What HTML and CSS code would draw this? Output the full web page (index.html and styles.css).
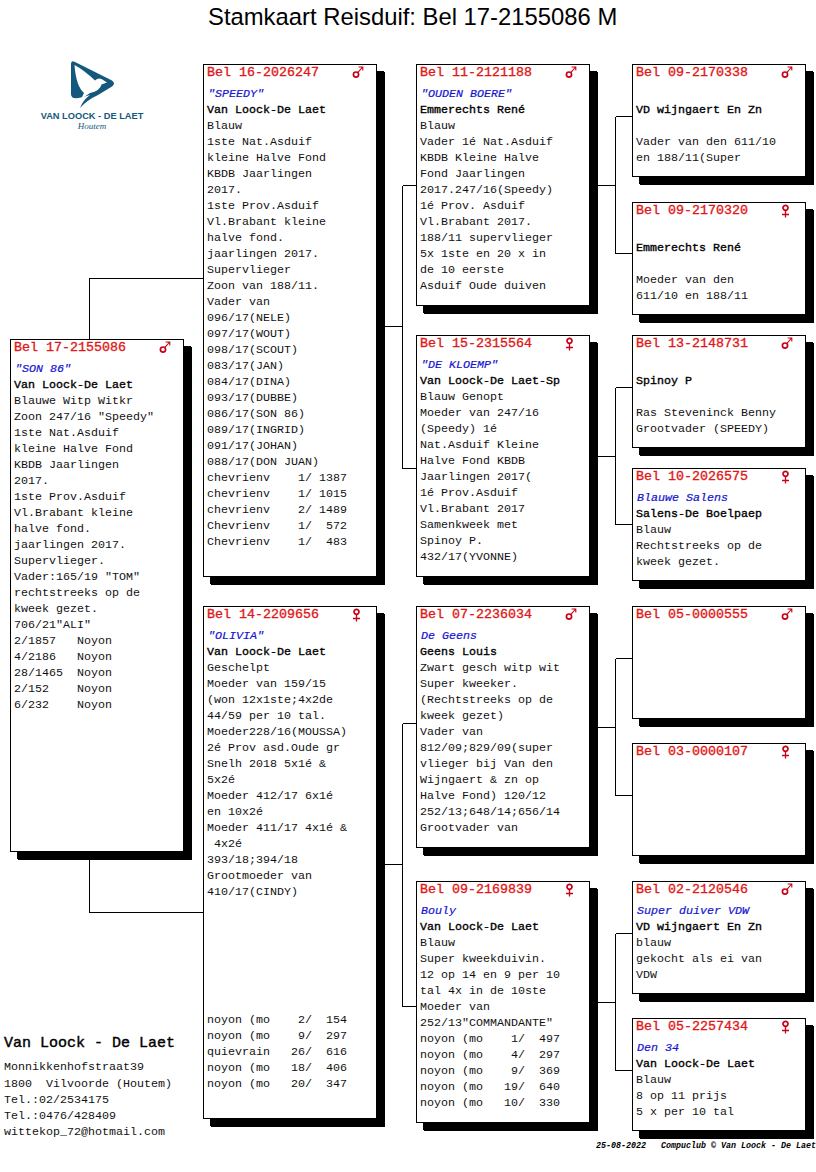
FILE: index.html
```html
<!DOCTYPE html>
<html lang="nl">
<head>
<meta charset="utf-8">
<title>Stamkaart Reisduif</title>
<link rel="stylesheet" href="styles.css">
</head>
<body>
<svg class="defs" width="0" height="0" aria-hidden="true">
  <symbol id="male" viewBox="0 0 12 15">
    <circle cx="4" cy="8.6" r="2.6" fill="none" stroke="currentColor" stroke-width="1.7"/>
    <path d="M5.8 6.6 10.6 1M6.6 1H10.8V4.4" fill="none" stroke="currentColor" stroke-width="1.1"/>
  </symbol>
  <symbol id="female" viewBox="0 0 12 15">
    <circle cx="4.5" cy="3.8" r="2.5" fill="none" stroke="currentColor" stroke-width="1.7"/>
    <path d="M4.5 6.5V13.5M1 10.5H8" fill="none" stroke="currentColor" stroke-width="1.3"/>
  </symbol>
</svg>

<h1 class="title">Stamkaart Reisduif: Bel 17-2155086 M</h1>

<main class="chart">
  <svg class="links" viewBox="0 60 816 1100" width="816" height="1100" aria-hidden="true">
    <path d="M89.5 339V278.5H203M89.5 852V912.5H203"/>
    <path d="M385 326.5H402.5M402.5 185.5V468.5M402.5 185.5H416M402.5 468.5H416"/>
    <path d="M385 864.5H402.5M402.5 723.5V1006.5M402.5 723.5H416M402.5 1006.5H416"/>
    <path d="M598 185.5H615.5M615.5 116.5V253.5M615.5 116.5H632M615.5 253.5H632"/>
    <path d="M598 456.5H615.5M615.5 387.5V524.5M615.5 387.5H632M615.5 524.5H632"/>
    <path d="M598 727.5H615.5M615.5 658.5V795.5M615.5 658.5H632M615.5 795.5H632"/>
    <path d="M598 1002.5H615.5M615.5 933.5V1070.5M615.5 933.5H632M615.5 1070.5H632"/>
  </svg>

  <div class="col col-a">
    <div class="brand">
      <svg class="brand-mark" viewBox="69 60 46 50" width="46" height="50" aria-hidden="true">
        <path class="brand-blue" d="M71 64Q71 60 75 62L112 80.500Q116 83.500 112 86.500L98 95Q87 100 80 108Q83 100 90 95L81 97.500Q71 100 71 94Z"/>
        <path class="brand-white" d="M74.500 65Q84 70 95 80.500Q98 77.500 101.500 79L107 82.500L101.500 84.500Q100 91 90 93L81 99L84 93Q76 86 74.500 65Z"/>
      </svg>
      <div class="brand-name">VAN LOOCK - DE LAET</div>
      <div class="brand-place">Houtem</div>
    </div>

    <article class="node tall root">
      <div class="head"><span>Bel 17-2155086</span><svg class="sex"><use href="#male"/></svg></div>
      <div class="name">"SON 86"</div>
      <div class="owner">Van Loock-De Laet</div>
      <div class="txt">Blauwe Witp Witkr
Zoon 247/16 "Speedy"
1ste Nat.Asduif
kleine Halve Fond
KBDB Jaarlingen
2017.
1ste Prov.Asduif
Vl.Brabant kleine
halve fond.
jaarlingen 2017.
Supervlieger.
Vader:165/19 "TOM"
rechtstreeks op de
kweek gezet.
706/21"ALI"
2/1857   Noyon
4/2186   Noyon
28/1465  Noyon
2/152    Noyon
6/232    Noyon</div>
    </article>

    <address class="contact">
      <div class="contact-name">Van Loock - De Laet</div>
      <div class="txt contact-street">Monnikkenhofstraat39</div>
      <div class="txt">1800  Vilvoorde (Houtem)
Tel.:02/2534175
Tel.:0476/428409
wittekop_72@hotmail.com</div>
    </address>
  </div>

  <div class="col col-b">
    <article class="node tall">
      <div class="head"><span>Bel 16-2026247</span><svg class="sex"><use href="#male"/></svg></div>
      <div class="name">"SPEEDY"</div>
      <div class="owner">Van Loock-De Laet</div>
      <div class="txt">Blauw
1ste Nat.Asduif
kleine Halve Fond
KBDB Jaarlingen
2017.
1ste Prov.Asduif
Vl.Brabant kleine
halve fond.
jaarlingen 2017.
Supervlieger
Zoon van 188/11.
Vader van
096/17(NELE)
097/17(WOUT)
098/17(SCOUT)
083/17(JAN)
084/17(DINA)
093/17(DUBBE)
086/17(SON 86)
089/17(INGRID)
091/17(JOHAN)
088/17(DON JUAN)
chevrienv    1/ 1387
chevrienv    1/ 1015
chevrienv    2/ 1489
Chevrienv    1/  572
Chevrienv    1/  483</div>
    </article>
    <article class="node tall g29">
      <div class="head"><span>Bel 14-2209656</span><svg class="sex"><use href="#female"/></svg></div>
      <div class="name">"OLIVIA"</div>
      <div class="owner">Van Loock-De Laet</div>
      <div class="txt">Geschelpt
Moeder van 159/15
(won 12x1ste;4x2de
44/59 per 10 tal.
Moeder228/16(MOUSSA)
2é Prov asd.Oude gr
Snelh 2018 5x1é &amp;
5x2é
Moeder 412/17 6x1é
en 10x2é
Moeder 411/17 4x1é &amp;
 4x2é
393/18;394/18
Grootmoeder van
410/17(CINDY)







noyon (mo    2/  154
noyon (mo    9/  297
quievrain   26/  616
noyon (mo   18/  406
noyon (mo   20/  347</div>
    </article>
  </div>

  <div class="col col-c">
    <article class="node mid">
      <div class="head"><span>Bel 11-2121188</span><svg class="sex"><use href="#male"/></svg></div>
      <div class="name">"OUDEN BOERE"</div>
      <div class="owner">Emmerechts René</div>
      <div class="txt">Blauw
Vader 1é Nat.Asduif
KBDB Kleine Halve
Fond Jaarlingen
2017.247/16(Speedy)
1é Prov. Asduif
Vl.Brabant 2017.
188/11 supervlieger
5x 1ste en 20 x in
de 10 eerste
Asduif Oude duiven</div>
    </article>
    <article class="node mid g29">
      <div class="head"><span>Bel 15-2315564</span><svg class="sex"><use href="#female"/></svg></div>
      <div class="name">"DE KLOEMP"</div>
      <div class="owner">Van Loock-De Laet-Sp</div>
      <div class="txt">Blauw Genopt
Moeder van 247/16
(Speedy) 1é
Nat.Asduif Kleine
Halve Fond KBDB
Jaarlingen 2017(
1é Prov.Asduif
Vl.Brabant 2017
Samenkweek met
Spinoy P.
432/17(YVONNE)</div>
    </article>
    <article class="node mid g29">
      <div class="head"><span>Bel 07-2236034</span><svg class="sex"><use href="#male"/></svg></div>
      <div class="name">De Geens</div>
      <div class="owner">Geens Louis</div>
      <div class="txt">Zwart gesch witp wit
Super kweeker.
(Rechtstreeks op de
kweek gezet)
Vader van
812/09;829/09(super
vlieger bij Van den
Wijngaert &amp; zn op
Halve Fond) 120/12
252/13;648/14;656/14
Grootvader van</div>
    </article>
    <article class="node mid g33">
      <div class="head"><span>Bel 09-2169839</span><svg class="sex"><use href="#female"/></svg></div>
      <div class="name">Bouly</div>
      <div class="owner">Van Loock-De Laet</div>
      <div class="txt">Blauw
Super kweekduivin.
12 op 14 en 9 per 10
tal 4x in de 10ste
Moeder van
252/13"COMMANDANTE"
noyon (mo    1/  497
noyon (mo    4/  297
noyon (mo    9/  369
noyon (mo   19/  640
noyon (mo   10/  330</div>
    </article>
  </div>

  <div class="col col-d">
    <article class="node low">
      <div class="head"><span>Bel 09-2170338</span><svg class="sex"><use href="#male"/></svg></div>
      <div class="name"></div>
      <div class="owner">VD wijngaert En Zn</div>
      <div class="txt">
Vader van den 611/10
en 188/11(Super</div>
    </article>
    <article class="node low g25">
      <div class="head"><span>Bel 09-2170320</span><svg class="sex"><use href="#female"/></svg></div>
      <div class="name"></div>
      <div class="owner">Emmerechts René</div>
      <div class="txt">
Moeder van den
611/10 en 188/11</div>
    </article>
    <article class="node low g20">
      <div class="head"><span>Bel 13-2148731</span><svg class="sex"><use href="#male"/></svg></div>
      <div class="name"></div>
      <div class="owner">Spinoy P</div>
      <div class="txt">
Ras Steveninck Benny
Grootvader (SPEEDY)</div>
    </article>
    <article class="node low g20">
      <div class="head"><span>Bel 10-2026575</span><svg class="sex"><use href="#female"/></svg></div>
      <div class="name">Blauwe Salens</div>
      <div class="owner">Salens-De Boelpaep</div>
      <div class="txt">Blauw
Rechtstreeks op de
kweek gezet.</div>
    </article>
    <article class="node low g25">
      <div class="head"><span>Bel 05-0000555</span><svg class="sex"><use href="#male"/></svg></div>
    </article>
    <article class="node low g24">
      <div class="head"><span>Bel 03-0000107</span><svg class="sex"><use href="#female"/></svg></div>
    </article>
    <article class="node low g25">
      <div class="head"><span>Bel 02-2120546</span><svg class="sex"><use href="#male"/></svg></div>
      <div class="name">Super duiver VDW</div>
      <div class="owner">VD wijngaert En Zn</div>
      <div class="txt">blauw
gekocht als ei van
VDW</div>
    </article>
    <article class="node low g24">
      <div class="head"><span>Bel 05-2257434</span><svg class="sex"><use href="#female"/></svg></div>
      <div class="name">Den 34</div>
      <div class="owner">Van Loock-De Laet</div>
      <div class="txt">Blauw
8 op 11 prijs
5 x per 10 tal</div>
    </article>
  </div>
</main>

<footer class="credit">25-08-2022   Compuclub © Van Loock - De Laet</footer>
</body>
</html>
```

FILE: styles.css
```css
* { box-sizing: border-box; }

html, body { margin: 0; padding: 0; background: #fff; }

body {
  width: 816px;
  height: 1172px;
  overflow: hidden;
  font-family: "Liberation Mono", monospace;
  font-size: 11.67px;
  line-height: 16px;
  color: #000;
}

.defs { position: absolute; }

.title {
  margin: 0;
  height: 60px;
  padding: 1px 0 0 208px;
  font-family: "Liberation Sans", Arial, sans-serif;
  font-size: 23.83px;
  font-weight: 400;
  line-height: 32px;
  white-space: nowrap;
}

.chart {
  position: relative;
  display: flex;
  align-items: flex-start;
  height: 1078px;
}

.links {
  position: absolute;
  left: 0;
  top: 0;
  fill: none;
  stroke: #000;
  stroke-width: 1;
  shape-rendering: crispEdges;
}

.col {
  position: relative;
  display: flex;
  flex-direction: column;
  flex: none;
}

.col-a { width: 180px; margin-left: 4px; }
.col-b { width: 174px; margin-left: 19px; padding-top: 4px; }
.col-c { width: 174px; margin-left: 39px; padding-top: 4px; }
.col-d { width: 174px; margin-left: 42px; padding-top: 4px; }

.node {
  width: 174px;
  flex: none;
  padding: 0 3px;
  background: #fff;
  border: 1px solid #000;
  box-shadow: 7px 7px 0 #000, 8px 8px 0 #000;
}

.tall { height: 513px; }
.mid { height: 242px; }
.low { height: 113px; }

.g20 { margin-top: 20px; }
.g24 { margin-top: 24px; }
.g25 { margin-top: 25px; }
.g29 { margin-top: 29px; }
.g33 { margin-top: 33px; }

.head {
  display: flex;
  justify-content: space-between;
  height: 21px;
  font-size: 13.33px;
  color: #e01818;
  -webkit-text-stroke: 0.35px #e01818;
}

.sex {
  width: 12px;
  height: 15px;
  margin: 1px 9px 0 0;
  color: #c80018;
}

.name {
  height: 16px;
  padding-left: 1px;
  font-style: italic;
  color: #1414d2;
  -webkit-text-stroke: 0.2px #1414d2;
  white-space: pre;
}

.owner {
  height: 16px;
  -webkit-text-stroke: 0.35px #000;
  white-space: pre;
}

.txt { white-space: pre; color: #111; }

.brand {
  width: 110px;
  height: 279px;
  margin-left: 33px;
  color: #14587c;
  text-align: center;
}

.brand-mark { display: block; margin-left: 32px; }

.brand-name {
  margin-top: 1px;
  font-family: "Liberation Sans", Arial, sans-serif;
  font-size: 9.25px;
  font-weight: 700;
  line-height: 11px;
  white-space: nowrap;
}

.brand-place {
  font-family: "Liberation Serif", serif;
  font-size: 9px;
  font-style: italic;
  line-height: 8px;
}

.brand-blue { fill: #14587c; }
.brand-white { fill: #fff; }

.root { margin-left: 6px; }

.contact {
  margin-top: 184px;
  font-style: normal;
}

.contact-name {
  height: 23px;
  font-size: 15px;
  -webkit-text-stroke: 0.4px #000;
  line-height: 16px;
}

.contact-street { margin-bottom: 1px; }

.credit {
  margin-top: 3px;
  font-size: 8.33px;
  font-style: italic;
  font-weight: 700;
  line-height: 10px;
  text-align: right;
  white-space: pre;
}
```
